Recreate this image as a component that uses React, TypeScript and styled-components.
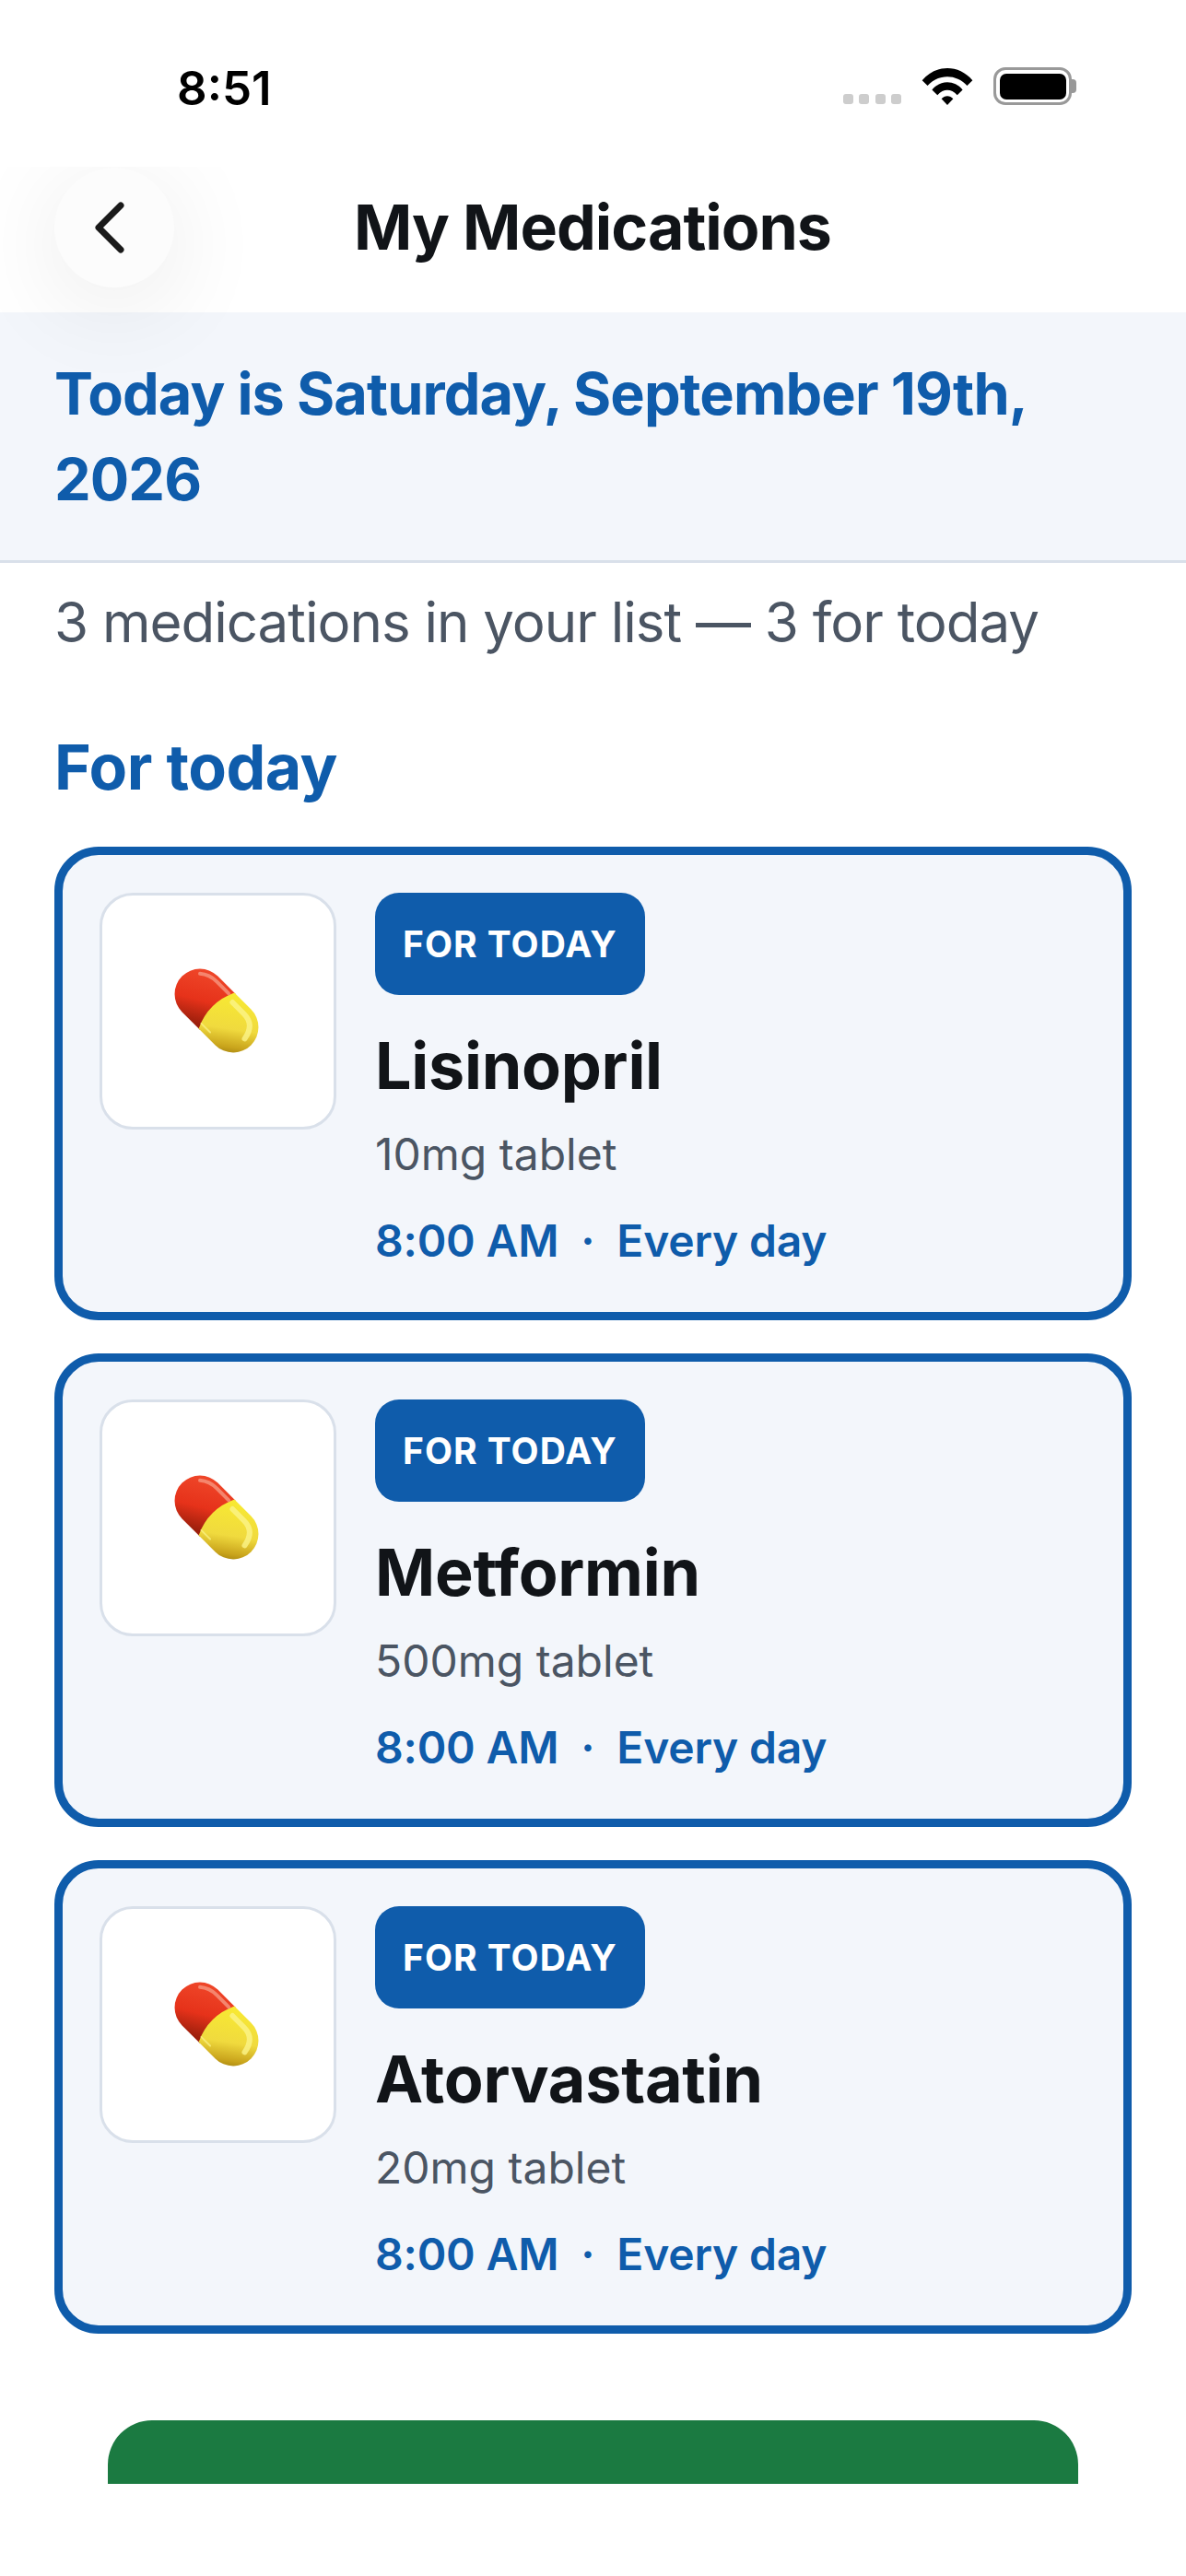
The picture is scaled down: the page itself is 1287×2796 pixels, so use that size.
import React from 'react';
import styled, { createGlobalStyle } from 'styled-components';

const GlobalStyle = createGlobalStyle`
  * { box-sizing: border-box; }
  html, body { margin: 0; padding: 0; background: #fff; }
  body { font-family: Inter, "Liberation Sans", sans-serif; color: #111418; }
`;

const meds = [
  { name: 'Lisinopril', dose: '10mg tablet' },
  { name: 'Metformin', dose: '500mg tablet' },
  { name: 'Atorvastatin', dose: '20mg tablet' },
];

const PillIcon = ({ id }: { id: string }) => (
  <PillSvg viewBox="0 0 100 100" aria-hidden="true">
    <defs>
      <linearGradient id={`${id}-red`} x1="0.2" y1="0" x2="0.8" y2="1">
        <stop offset="0" stopColor="#f0492b" />
        <stop offset="0.6" stopColor="#e6321a" />
        <stop offset="1" stopColor="#9c1f0c" />
      </linearGradient>
      <linearGradient id={`${id}-yellow`} x1="0.1" y1="0" x2="0.9" y2="1">
        <stop offset="0" stopColor="#f8ea32" />
        <stop offset="0.55" stopColor="#f0da3e" />
        <stop offset="0.82" stopColor="#c9a41c" />
        <stop offset="1" stopColor="#94740a" />
      </linearGradient>
    </defs>
    <g transform="rotate(45 50 50)">
      <path d="M52 22 H24 a28 28 0 0 0 0 56 H52 Z" fill={`url(#${id}-red)`} />
      <path d="M50 22 H76 a28 28 0 0 1 0 56 H50 q-13 -28 0 -56 Z" fill={`url(#${id}-yellow)`} />
      <path d="M8 34 Q16 27 28 27 H46" stroke="#f6907a" strokeWidth="4" fill="none" strokeLinecap="round" opacity="0.85" />
      <path d="M56 31 H74 Q91 31 94 50" stroke="#fbf48a" strokeWidth="6" fill="none" strokeLinecap="round" opacity="0.8" />
      <path d="M48 72 H62" stroke="#fbf48a" strokeWidth="2" fill="none" strokeLinecap="round" opacity="0.7" />
    </g>
  </PillSvg>
);

export default function App() {
  return (
    <Screen>
      <GlobalStyle />
      <StatusBar>
        <Time>8:51</Time>
        <StatusIcons>
          <SignalDots>
            <SignalDot />
            <SignalDot />
            <SignalDot />
            <SignalDot />
          </SignalDots>
          <svg width="56" height="41" viewBox="0 0 56 42" aria-hidden="true">
            <path d="M0 14.5 C15 -3.5 41 -3.5 56 14.5 L50 20.5 C38 7 18 7 6 20.5 Z" fill="#000" />
            <path d="M11 25 C20 14 36 14 45 25 L39 31 C32 23.5 24 23.5 17 31 Z" fill="#000" />
            <path d="M21.5 35 C25 31 31 31 34.5 35 L28 42 Z" fill="#000" />
          </svg>
          <Battery>
            <BatteryFill />
            <BatteryCap />
          </Battery>
        </StatusIcons>
      </StatusBar>
      <NavBar>
        <BackButton aria-label="Back">
          <svg width="40" height="60" viewBox="0 0 40 60" aria-hidden="true">
            <path d="M32 6 L8 30 L32 54" fill="none" stroke="#1a1a1a" strokeWidth="7" strokeLinecap="round" strokeLinejoin="round" />
          </svg>
        </BackButton>
        <Title>My Medications</Title>
      </NavBar>
      <DateBanner>Today is Saturday, September 19th, 2026</DateBanner>
      <Content>
        <Summary>3 medications in your list — 3 for today</Summary>
        <SectionTitle>For today</SectionTitle>
        <CardList>
          {meds.map((med) => (
            <Card key={med.name}>
              <Thumb>
                <PillIcon id={med.name} />
              </Thumb>
              <Details>
                <Badge>FOR TODAY</Badge>
                <MedName>{med.name}</MedName>
                <Dose>{med.dose}</Dose>
                <Schedule>
                  <span>8:00 AM</span>
                  <span>·</span>
                  <span>Every day</span>
                </Schedule>
              </Details>
            </Card>
          ))}
        </CardList>
      </Content>
      <ButtonClip>
        <GreenButton />
      </ButtonClip>
    </Screen>
  );
}

const Screen = styled.div`
  width: 1287px;
  height: 2796px;
  background: #fff;
  overflow: hidden;
`;

const StatusBar = styled.div`
  height: 181px;
  padding: 66px 124px 0 192px;
  display: flex;
  justify-content: space-between;
  align-items: flex-start;
`;

const Time = styled.div`
  font-size: 51px;
  line-height: 60px;
  font-weight: 600;
  color: #000;
`;

const StatusIcons = styled.div`
  display: flex;
  align-items: flex-end;
  gap: 22px;
  margin-top: 7px;
`;

const SignalDots = styled.div`
  display: flex;
  gap: 6.5px;
  padding-bottom: 1px;
`;

const SignalDot = styled.div`
  width: 11px;
  height: 11px;
  border-radius: 3px;
  background: #cdcdcd;
`;

const Battery = styled.div`
  position: relative;
  width: 85px;
  height: 41px;
  padding: 3.5px;
  border: 3px solid #999;
  border-radius: 13px;
`;

const BatteryFill = styled.div`
  width: 100%;
  height: 100%;
  border-radius: 7px;
  background: #000;
`;

const BatteryCap = styled.div`
  position: absolute;
  right: -8px;
  top: 10px;
  width: 5px;
  height: 15px;
  border-radius: 0 4px 4px 0;
  background: #999;
`;

const NavBar = styled.div`
  position: relative;
  z-index: 1;
  height: 158px;
  padding: 0 59px;
  display: flex;
  align-items: flex-start;
`;

const BackButton = styled.button`
  width: 130px;
  height: 130px;
  flex: none;
  margin-top: 1px;
  padding: 0 10px 0 0;
  border: none;
  border-radius: 50%;
  background: #fcfcfc;
  box-shadow: 0 18px 110px rgba(0, 0, 0, 0.09);
  clip-path: inset(-1px -300px -300px -300px);
  display: flex;
  align-items: center;
  justify-content: center;
`;

const Title = styled.h1`
  margin: 29px 0 0 195px;
  font-size: 68px;
  line-height: 72px;
  font-weight: 700;
  letter-spacing: -1px;
  color: #111418;
`;

const DateBanner = styled.div`
  height: 272px;
  padding: 42px 59px 0;
  border-bottom: 3px solid #d9e0ea;
  background: #f3f6fb;
  font-size: 63px;
  line-height: 93px;
  font-weight: 700;
  letter-spacing: -0.9px;
  color: #0f5cab;
`;

const Content = styled.div`
  padding: 28px 59px 0;
`;

const Summary = styled.p`
  margin: 0;
  font-size: 60px;
  line-height: 72px;
  font-weight: 400;
  letter-spacing: -1px;
  color: #4b5563;
`;

const SectionTitle = styled.h2`
  margin: 82px 0 0;
  font-size: 68px;
  line-height: 78px;
  font-weight: 700;
  letter-spacing: -0.5px;
  color: #0f5cab;
`;

const CardList = styled.div`
  margin-top: 48px;
  display: flex;
  flex-direction: column;
  gap: 36px;
`;

const Card = styled.div`
  height: 514px;
  padding: 41px 40px;
  display: flex;
  align-items: flex-start;
  gap: 42px;
  border: 9px solid #0f5cab;
  border-radius: 48px;
  background: #f3f6fb;
`;

const Thumb = styled.div`
  width: 257px;
  height: 257px;
  flex: none;
  display: flex;
  align-items: center;
  justify-content: center;
  border: 3px solid #d9e0ea;
  border-radius: 36px;
  background: #fff;
`;

const PillSvg = styled.svg`
  width: 98px;
  height: 98px;
  margin: 0 3px 2px 0;
`;

const Details = styled.div`
  display: flex;
  flex-direction: column;
  align-items: flex-start;
`;

const Badge = styled.div`
  height: 111px;
  padding: 0 30px;
  display: flex;
  align-items: center;
  border-radius: 26px;
  background: #0f5cab;
  color: #fff;
  font-size: 39px;
  font-weight: 700;
  letter-spacing: 1px;
`;

const MedName = styled.div`
  margin-top: 35px;
  font-size: 70px;
  line-height: 84px;
  font-weight: 700;
  letter-spacing: -0.25px;
  color: #111418;
`;

const Dose = styled.div`
  margin-top: 25px;
  font-size: 48px;
  line-height: 58px;
  color: #4b5563;
`;

const Schedule = styled.div`
  margin-top: 36px;
  display: flex;
  gap: 24px;
  font-size: 48px;
  line-height: 58px;
  font-weight: 600;
  letter-spacing: -0.2px;
  color: #0f5cab;
`;

const ButtonClip = styled.div`
  margin: 94px 117px 0;
  height: 69px;
  overflow: hidden;
`;

const GreenButton = styled.div`
  height: 180px;
  border-radius: 48px;
  background: #1b7a41;
`;
